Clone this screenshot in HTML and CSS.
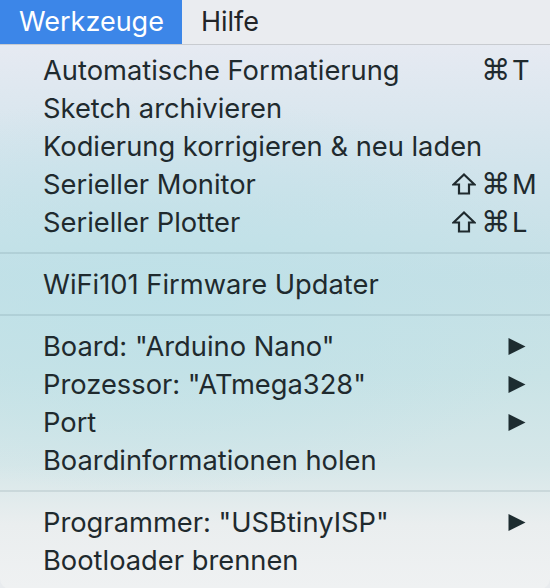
FILE: index.html
```html
<!DOCTYPE html>
<html lang="de">
<head>
    <meta charset="UTF-8">
    <meta name="viewport" content="width=device-width, initial-scale=1.0">
    <title>Werkzeuge</title>
    <link rel="stylesheet" href="styles.css">
</head>
<body>
    <div class="menubar">
        <div class="menu-title active">Werkzeuge</div>
        <div class="menu-title">Hilfe</div>
    </div>

    <div class="menu">
        <div class="item">
            <span>Automatische Formatierung</span>
            <span class="key"><span class="mods"><span class="cmd">&#8984;</span></span><span class="letter">T</span></span>
        </div>
        <div class="item"><span>Sketch archivieren</span></div>
        <div class="item"><span>Kodierung korrigieren &amp; neu laden</span></div>
        <div class="item">
            <span>Serieller Monitor</span>
            <span class="key"><span class="mods"><svg class="shift" viewBox="0 0 24 22"><polygon points="12,1.5 22.5,11.5 17,11.5 17,20.5 7,20.5 7,11.5 1.5,11.5"/></svg><span class="cmd">&#8984;</span></span><span class="letter">M</span></span>
        </div>
        <div class="item">
            <span>Serieller Plotter</span>
            <span class="key"><span class="mods"><svg class="shift" viewBox="0 0 24 22"><polygon points="12,1.5 22.5,11.5 17,11.5 17,20.5 7,20.5 7,11.5 1.5,11.5"/></svg><span class="cmd">&#8984;</span></span><span class="letter">L</span></span>
        </div>

        <div class="separator"></div>

        <div class="item"><span>WiFi101 Firmware Updater</span></div>

        <div class="separator"></div>

        <div class="item"><span>Board: "Arduino Nano"</span><svg class="arrow" viewBox="0 0 18 18"><polygon points="0,0 18,9 0,18"/></svg></div>
        <div class="item"><span>Prozessor: "ATmega328"</span><svg class="arrow" viewBox="0 0 18 18"><polygon points="0,0 18,9 0,18"/></svg></div>
        <div class="item"><span>Port</span><svg class="arrow" viewBox="0 0 18 18"><polygon points="0,0 18,9 0,18"/></svg></div>
        <div class="item"><span>Boardinformationen holen</span></div>

        <div class="separator"></div>

        <div class="item"><span>Programmer: "USBtinyISP"</span><svg class="arrow" viewBox="0 0 18 18"><polygon points="0,0 18,9 0,18"/></svg></div>
        <div class="item"><span>Bootloader brennen</span></div>
    </div>
</body>
</html>
```

FILE: styles.css
```css
body {
    margin: 0;
    width: 550px;
    height: 588px;
    overflow: hidden;
    font-family: Inter, "Liberation Sans", "DejaVu Sans", sans-serif;
    background: #e8ebee;
}

.menubar {
    display: flex;
    height: 44px;
    background: #eaecf0;
    border-bottom: 1px solid #c8cbd0;
}

.menu-title {
    padding: 0 18px 0 19px;
    font-size: 27px;
    line-height: 44px;
    color: #222428;
}

.menu-title.active {
    background: #3c86e8;
    color: #ffffff;
}

.menu {
    padding: 6px 0 10px 0;
    border-radius: 0 0 10px 10px;
    background:
        radial-gradient(ellipse 420px 200px at 160px 250px, rgba(190, 225, 232, 0.9), rgba(190, 225, 232, 0) 100%),
        linear-gradient(180deg, #e6eaf2 0px, #d2e4ec 120px, #c4e0e6 230px, #c9e3e6 330px, #d6e7e9 420px, #eaeeef 480px, #eff1f2 543px);
    color: #1f2a2e;
}

.item {
    display: flex;
    justify-content: space-between;
    align-items: center;
    height: 38px;
    padding: 0 14px 0 43px;
    font-size: 27.3px;
}

.key {
    display: flex;
    align-items: center;
}

.mods {
    display: flex;
    align-items: center;
    justify-content: flex-end;
    gap: 5px;
}

.cmd {
    font-family: "DejaVu Sans", sans-serif;
    font-size: 29px;
}

.shift {
    width: 24px;
    height: 22px;
    fill: none;
    stroke: #1f2a2e;
    stroke-width: 2.2;
    stroke-linejoin: miter;
}

.letter {
    width: 24px;
    margin-left: 2px;
}

.arrow {
    width: 18px;
    height: 17px;
    margin-right: 10px;
    fill: #1d2c30;
}

.separator {
    height: 2px;
    margin: 11px 0;
    background: rgba(60, 90, 100, 0.12);
}
```
